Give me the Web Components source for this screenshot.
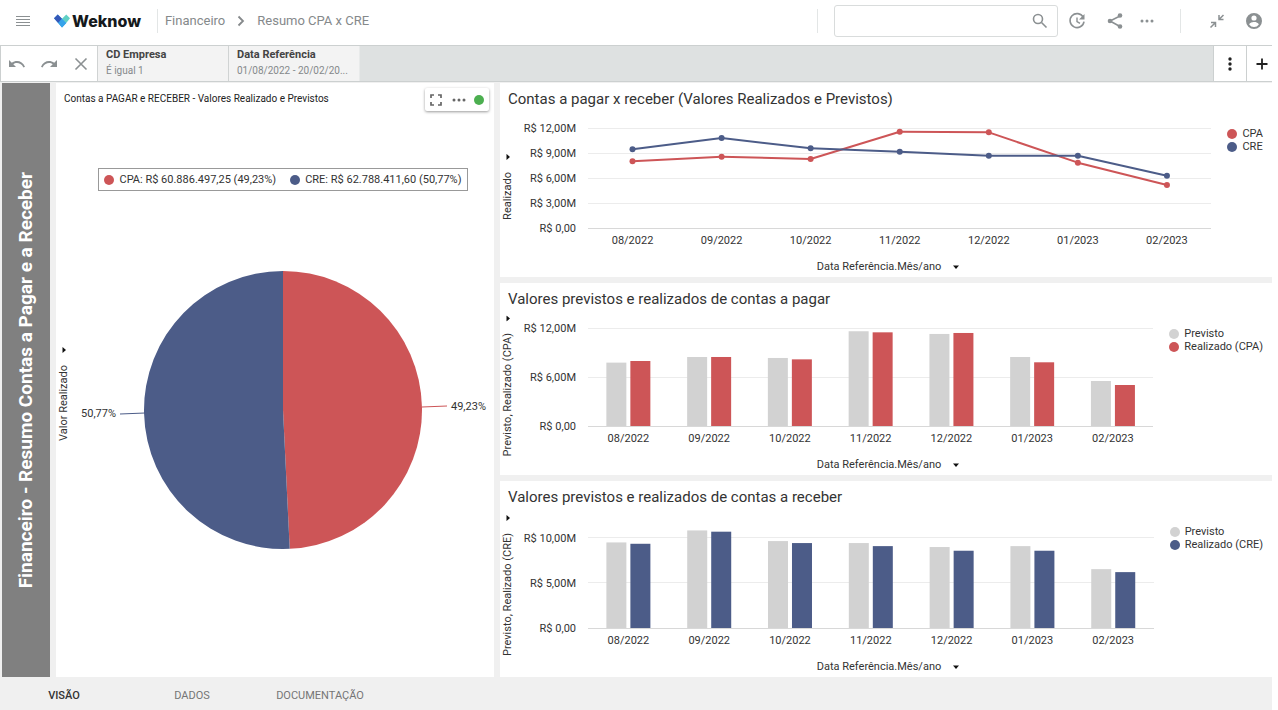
<!DOCTYPE html>
<html lang="pt-BR">
<head>
<meta charset="utf-8">
<meta name="viewport" content="width=device-width, initial-scale=1">
<title>Weknow - Resumo CPA x CRE</title>
<style>
  :root {
    --cpa: #cd5557;
    --cre: #4c5c88;
    --previsto: #d2d2d2;
    --ink: #333;
    --muted: #8b9092;
    --line: #ccd0d0;
    --canvas: #f0f0f0;
  }
  body { margin: 0; background: #fff; font-family: Roboto, "Liberation Sans", sans-serif; font-size: 11px; color: var(--ink); }
</style>
</head>
<body>
<weknow-app></weknow-app>

<script>
class ShadowElement extends HTMLElement {
  constructor() {
    super();
    this.attachShadow({ mode: 'open' });
  }
  render(html) { this.shadowRoot.innerHTML = html; }
}

const ICONS = {
  menu: '<path d="M5 7.500h14M5 10.500h14M5 13.500h14M5 16.500h14" stroke="currentColor" stroke-width="1.200" fill="none"/>',
  refresh: '<path d="M18.2 8.2A7 7 0 1 0 19 12.6" fill="none" stroke="currentColor" stroke-width="1.600"/><path d="M19.500 5v5.500h-5.500z" fill="currentColor"/><path d="M12 8.500v4l3 1.800" fill="none" stroke="currentColor" stroke-width="1.400"/>',
  share: '<path d="M17 7L7 12l10 5.500" fill="none" stroke="currentColor" stroke-width="1.600"/><circle cx="17" cy="6.500" r="2.300"/><circle cx="7" cy="12" r="2.300"/><circle cx="17" cy="17.500" r="2.300"/>',
  dots: '<circle cx="7" cy="12" r="1.500"/><circle cx="12" cy="12" r="1.500"/><circle cx="17" cy="12" r="1.500"/>',
  kebab: '<circle cx="12" cy="7" r="1.700"/><circle cx="12" cy="12" r="1.700"/><circle cx="12" cy="17" r="1.700"/>',
  collapse: '<path d="M14 6v4.500h4.500M14.500 10L18.500 6M6 13.500h4.500V18M10 14l-4.500 4.500" fill="none" stroke="currentColor" stroke-width="1.500"/>',
  user: '<path fill-rule="evenodd" d="M12 4a8 8 0 1 0 0 16 8 8 0 0 0 0-16zm0 2.400a2.600 2.600 0 1 1 0 5.200 2.600 2.600 0 0 1 0-5.200zM12 18a5.700 5.700 0 0 1-4.800-2.600c0-1.600 3.200-2.500 4.800-2.500s4.800.9 4.800 2.500A5.700 5.700 0 0 1 12 18z"/>',
  undo: '<path d="M4 8v7h7l-2.700-2.700C10.500 10.500 15.500 10 18.500 15.500l1.500-.7C17.500 8.500 11 7.500 6.800 10.800z"/>',
  redo: '<path d="M20 8v7h-7l2.700-2.700C13.500 10.500 8.500 10 5.500 15.500L4 14.800C6.500 8.500 13 7.500 17.200 10.800z"/>',
  close: '<path d="M6.500 6.500l11 11M17.500 6.500l-11 11" fill="none" stroke="currentColor" stroke-width="1.600"/>',
  plus: '<path d="M12 6.500v11M6.500 12h11" fill="none" stroke="currentColor" stroke-width="1.800"/>',
  expand: '<path d="M7 10V7h3M14 7h3v3M17 14v3h-3M10 17H7v-3" fill="none" stroke="currentColor" stroke-width="1.700"/>'
};

/* Icon-only button; the label attribute gives its accessible name. */
class IconButton extends ShadowElement {
  connectedCallback() {
    this.render(`
      <style>
        :host { display: flex; color: var(--muted); }
        button { flex: 1; display: flex; align-items: center; justify-content: center; padding: 0; border: 0; background: none; color: inherit; cursor: pointer; min-width: 0; }
        svg { width: 24px; height: 24px; fill: currentColor; flex: none; }
      </style>
      <button type="button" aria-label="${this.getAttribute('label')}"><svg viewBox="0 0 24 24" aria-hidden="true">${ICONS[this.getAttribute('icon')]}</svg></button>`);
  }
}
customElements.define('icon-button', IconButton);

class AppHeader extends ShadowElement {
  connectedCallback() {
    this.render(`
      <style>
        :host { display: flex; align-items: center; height: 45px; padding-bottom: 4px; box-sizing: border-box; background: #fff; }
        .menu { width: 46px; }
        .brand { display: flex; align-items: center; gap: 2px; margin-left: 8px; color: #15191c; text-decoration: none; font: 800 16px/20px Inter, Roboto, sans-serif; }
        .brand svg { width: 16px; height: 14px; }
        .rule { width: 1px; height: 24px; background: #e3e6e6; }
        .brand + .rule { margin-left: 16px; }
        nav { display: flex; align-items: center; gap: 12px; margin-left: 7px; font-size: 13px; line-height: 20px; color: #85898b; white-space: nowrap; }
        nav a { color: inherit; text-decoration: none; }
        nav svg { width: 8px; height: 12px; }
        .search { display: flex; align-items: center; box-sizing: border-box; width: 224px; height: 32px; margin-left: 16px; padding-right: 9px; border: 1px solid #d9dcdc; border-radius: 3px; }
        .spacer { flex: 1; }
        input { flex: 1; min-width: 0; height: 100%; padding: 0 8px; border: 0; background: none; font: inherit; font-size: 13px; outline: none; box-sizing: border-box; }
        .search svg { width: 16px; height: 16px; }
        .wide { width: 38px; }
        .dots { width: 25px; }
        .split { margin: 0 17px 0 21px; }
        .user { width: 36px; }
      </style>
      <icon-button class="menu" icon="menu" label="Menu"></icon-button>
      <a class="brand" href="#">
        <svg viewBox="0 0 17 14" aria-hidden="true">
          <path d="M0 4L4 0l4.500 4.500L13 9l-4.500 5z" fill="#3a9fe0"/><path d="M0 4L4 0l4.500 4.500L4.500 9z" fill="#3558b8"/>
          <path d="M8.500 4.500L13 0l4 4-4 5z" fill="#5fd0c5"/><path d="M4.500 9l4-4.500L13 9l-4.500 5z" fill="#36a3ea"/>
        </svg>Weknow</a>
      <span class="rule"></span>
      <nav aria-label="Trilha">
        <a href="#financeiro">Financeiro</a>
        <svg viewBox="0 0 8 12" aria-hidden="true"><path d="M1.500 1.500L6 6l-4.500 4.500" fill="none" stroke="currentColor" stroke-width="1.800"/></svg>
        <a href="#resumo">Resumo CPA x CRE</a>
      </nav>
      <span class="spacer"></span>
      <span class="rule"></span>
      <div class="search">
        <input type="search" aria-label="Pesquisar">
        <svg viewBox="0 0 16 16" aria-hidden="true"><g fill="none" stroke="#8b9092" stroke-width="1.600"><circle cx="6" cy="6" r="4.500"/><path d="M9.500 9.500l5 5"/></g></svg>
      </div>
      <icon-button class="wide" icon="refresh" label="Atualizar"></icon-button>
      <icon-button class="wide" icon="share" label="Compartilhar"></icon-button>
      <icon-button class="dots" icon="dots" label="Mais opções"></icon-button>
      <span class="rule split"></span>
      <icon-button class="wide" icon="collapse" label="Recolher"></icon-button>
      <icon-button class="user" icon="user" label="Conta"></icon-button>`);
  }
}
customElements.define('app-header', AppHeader);

class FilterChip extends ShadowElement {
  connectedCallback() {
    this.render(`
      <style>
        :host { display: block; width: 131px; border-left: 1px solid #d0d3d3; box-sizing: border-box; background: #f3f3f3; }
        button { display: block; width: 100%; height: 100%; padding: 0 8px 2px; border: 0; background: none; font: inherit; text-align: left; line-height: 16px; cursor: pointer; white-space: nowrap; }
        strong { display: block; font-weight: 700; color: #444; }
        span { display: block; font-size: 10px; color: #85898b; }
      </style>
      <button type="button"><strong>${this.getAttribute('name')}</strong><span><slot></slot></span></button>`);
  }
}
customElements.define('filter-chip', FilterChip);

class FilterBar extends ShadowElement {
  connectedCallback() {
    this.render(`
      <style>
        :host { display: flex; height: 37px; box-sizing: border-box; border: 1px solid var(--line); border-right: 0; background: #dee1e1; }
        .history { display: flex; width: 96px; background: #fff; }
        .history icon-button { width: 32px; }
        .spacer { flex: 1; border-left: 1px solid #e8eaea; }
        .end { background: #fff; color: #222; border-left: 1px solid var(--line); width: 32px; }
        .add { width: 21px; padding-left: 4px; }
      </style>
      <div class="history">
        <icon-button icon="undo" label="Desfazer"></icon-button>
        <icon-button icon="redo" label="Refazer"></icon-button>
        <icon-button icon="close" label="Limpar"></icon-button>
      </div>
      <filter-chip name="CD Empresa">É igual 1</filter-chip>
      <filter-chip name="Data Referência">01/08/2022 - 20/02/20...</filter-chip>
      <span class="spacer"></span>
      <icon-button class="end" icon="kebab" label="Opções de filtro"></icon-button>
      <icon-button class="end add" icon="plus" label="Adicionar filtro"></icon-button>`);
  }
}
customElements.define('filter-bar', FilterBar);

class SideTitle extends ShadowElement {
  connectedCallback() {
    this.render(`
      <style>
        :host { display: flex; align-items: center; justify-content: center; background: #808080; }
        h1 { margin: 0; color: #fff; font-size: 19px; line-height: 24px; font-weight: 700; writing-mode: vertical-rl; transform: rotate(180deg); white-space: nowrap; }
      </style>
      <h1><slot></slot></h1>`);
  }
}
customElements.define('side-title', SideTitle);

/* Axis name with its drop-down arrow, set upright or along the vertical axis. */
class AxisPicker extends ShadowElement {
  connectedCallback() {
    this.render(`
      <style>
        :host { display: flex; align-items: center; justify-content: center; }
        button { display: flex; align-items: center; gap: 12px; padding: 0; border: 0; background: none; font: inherit; line-height: 16px; color: inherit; white-space: nowrap; cursor: pointer; }
        svg { width: 6px; height: 6px; flex: none; }
        :host([vertical]) button { writing-mode: vertical-rl; transform: rotate(180deg); }
        :host([vertical]) svg { transform: rotate(90deg); }
      </style>
      <button type="button"><slot></slot><svg viewBox="0 0 6 6" aria-hidden="true"><path d="M0 1.500h6L3 5z" fill="#111"/></svg></button>`);
  }
}
customElements.define('axis-picker', AxisPicker);

class LegendItem extends ShadowElement {
  connectedCallback() {
    this.render(`
      <style>
        :host { display: flex; align-items: center; gap: 5px; line-height: 13px; white-space: nowrap; }
        i { width: 10px; height: 10px; border-radius: 50%; background: var(--${this.getAttribute('series')}); }
      </style>
      <i></i><slot></slot>`);
  }
}
customElements.define('legend-item', LegendItem);

/* Card of a cartesian chart: title, axis names, plot and legend. */
class ChartPanel extends ShadowElement {
  connectedCallback() {
    this.render(`
      <style>
        :host { display: grid; grid-template: auto minmax(0, 1fr) auto / 16px minmax(0, 1fr) auto; background: #fff; padding-top: 7px; box-sizing: border-box; min-height: 0; }
        h2 { grid-column: 1 / -1; margin: 0 0 0 8px; font-size: 15px; line-height: 18px; font-weight: 400; }
        .y { grid-area: 2 / 1 / 4 / 2; padding-bottom: 11px; }
        .plot { grid-area: 2 / 2; display: grid; margin: 20px 0 0 72px; min-height: 0; }
        .legend { grid-area: 2 / 3; margin: 19px 9px 0 16px; }
        .x { grid-area: 3 / 1 / 4 / -1; padding: 6px 0 2px 4px; }
      </style>
      <h2>${this.getAttribute('heading')}</h2>
      <axis-picker class="y" vertical>${this.getAttribute('y-name')}</axis-picker>
      <div class="plot"><slot></slot></div>
      <div class="legend"><slot name="legend"></slot></div>
      <axis-picker class="x">${this.getAttribute('x-name')}</axis-picker>`);
  }
}
customElements.define('chart-panel', ChartPanel);

/* Shared scale, grid lines and labels of the month charts. */
class MonthChart extends ShadowElement {
  connectedCallback() {
    this.max = Number(this.getAttribute('max'));
    this.months = this.getAttribute('months').split(' ');
    this.series = JSON.parse(this.getAttribute('values'));
    const ticks = this.getAttribute('ticks').split(' ').map(Number);
    this.render(`
      <style>
        :host { display: flex; flex-direction: column; min-height: 0; }
        svg { flex: 1 0 60px; width: 100%; min-height: 0; overflow: visible; display: block; }
        text { font-size: 11px; fill: var(--ink); text-anchor: end; }
        .grid { stroke: #ececec; shape-rendering: crispEdges; }
        .base { stroke: #d8d8d8; }
        .months { display: flex; line-height: 13px; padding: 6px 0; }
        .months span { flex: 1; text-align: center; }
      </style>
      <svg role="img" aria-label="${Object.keys(this.series).join(', ').toUpperCase()}">
        ${ticks.map(t => `<line class="grid${t ? '' : ' base'}" x1="0" x2="100%" y1="${this.y(t)}" y2="${this.y(t)}"/>
          <text x="-12" y="${this.y(t)}" dy="4">R$ ${t},00${t ? 'M' : ''}</text>`).join('')}
        ${this.marks()}
      </svg>
      <div class="months">${this.months.map(m => `<span>${m}</span>`).join('')}</div>`);
  }
  y(v) { return (100 - v / this.max * 100).toFixed(2) + '%'; }
  x(i) { return ((i + 0.5) / this.months.length * 100).toFixed(2) + '%'; }
}

class LineChart extends MonthChart {
  marks() {
    return Object.entries(this.series).map(([name, v]) => `<g stroke="var(--${name})" fill="var(--${name})" stroke-width="2">
      ${v.slice(1).map((b, i) => `<line x1="${this.x(i)}" y1="${this.y(v[i])}" x2="${this.x(i + 1)}" y2="${this.y(b)}"/>`).join('')}
      ${v.map((a, i) => `<circle cx="${this.x(i)}" cy="${this.y(a)}" r="3" stroke="none"/>`).join('')}</g>`).join('');
  }
}
customElements.define('line-chart', LineChart);

class BarChart extends MonthChart {
  marks() {
    return Object.entries(this.series).map(([name, v], s) => `<g fill="var(--${name})" transform="translate(${s ? 2 : -22} 0)">
      ${v.map((a, i) => `<rect x="${this.x(i)}" y="${this.y(a)}" width="20" height="${(a / this.max * 100).toFixed(2)}%"/>`).join('')}</g>`).join('');
  }
}
customElements.define('bar-chart', BarChart);

class PieChart extends ShadowElement {
  connectedCallback() {
    const share = Number(this.getAttribute('share')) / 100, r = 139, cx = 211, cy = 140;
    const a = share * 2 * Math.PI;
    const ex = cx + r * Math.sin(a), ey = cy - r * Math.cos(a);
    this.render(`
      <style>
        :host { display: block; }
        svg { display: block; width: 100%; max-height: 560px; }
        text { font-size: 11px; fill: var(--ink); }
      </style>
      <svg viewBox="0 0 422 280" role="img" aria-label="CPA e CRE">
        <path d="M${cx} ${cy}V${cy - r}A${r} ${r} 0 0 1 ${ex} ${ey}Z" fill="var(--cpa)"/>
        <path d="M${cx} ${cy}L${ex} ${ey}A${r} ${r} 0 1 1 ${cx} ${cy - r}Z" fill="var(--cre)"/>
        <path d="M350 137l25-1" stroke="var(--cpa)"/>
        <path d="M48 144l25-1" stroke="var(--cre)"/>
        <text x="379" y="140">49,23%</text>
        <text x="44" y="147" text-anchor="end">50,77%</text>
      </svg>`);
  }
}
customElements.define('pie-chart', PieChart);

class PiePanel extends ShadowElement {
  connectedCallback() {
    this.render(`
      <style>
        :host { display: grid; grid-template: 29px minmax(0, 1fr) / 16px minmax(0, 1fr); background: #fff; position: relative; }
        h2 { grid-column: 1 / -1; margin: 0 0 0 8px; font-size: 10px; line-height: 32px; font-weight: 400; color: #222; }
        .tools { position: absolute; top: 5px; right: 5px; display: flex; align-items: center; height: 23px; padding-right: 5px; background: #fff; border-radius: 2px; box-shadow: 0 1px 3px rgba(0, 0, 0, .4); }
        .tools icon-button { width: 23px; color: #666; }
        .tools icon-button:first-child { width: 22px; }
        .tools i { width: 10px; height: 10px; margin-left: 4px; border-radius: 50%; background: #4caf50; }
        .body { display: flex; flex-direction: column; align-items: center; padding-top: 56px; }
        .legend { display: flex; gap: 14px; padding: 4px 5px; border: 1px solid #999; }
        pie-chart { width: 100%; margin: auto 0; }
        .room { height: 48px; }
      </style>
      <h2>Contas a PAGAR e RECEBER - Valores Realizado e Previstos</h2>
      <div class="tools">
        <icon-button icon="expand" label="Expandir"></icon-button>
        <icon-button icon="dots" label="Opções do gráfico"></icon-button>
        <i></i>
      </div>
      <axis-picker vertical>Valor Realizado</axis-picker>
      <div class="body">
        <div class="legend">
          <legend-item series="cpa">CPA: R$ 60.886.497,25 (49,23%)</legend-item>
          <legend-item series="cre">CRE: R$ 62.788.411,60 (50,77%)</legend-item>
        </div>
        <pie-chart share="49.23"></pie-chart>
        <div class="room"></div>
      </div>`);
  }
}
customElements.define('pie-panel', PiePanel);

class ViewTabs extends ShadowElement {
  connectedCallback() {
    this.render(`
      <style>
        :host { display: block; background: var(--canvas); }
        nav { display: flex; }
        a { width: 128px; padding: 11px 0 6px; line-height: 16px; text-align: center; text-decoration: none; color: #757575; font-weight: 400; }
        a[aria-current] { color: #333; font-weight: 500; }
      </style>
      <nav aria-label="Seções">
        <a href="#visao" aria-current="page">VISÃO</a><a href="#dados">DADOS</a><a href="#documentacao">DOCUMENTAÇÃO</a>
      </nav>`);
  }
}
customElements.define('view-tabs', ViewTabs);

class WeknowApp extends ShadowElement {
  connectedCallback() {
    const months = '08/2022 09/2022 10/2022 11/2022 12/2022 01/2023 02/2023';
    this.render(`
      <style>
        :host { display: flex; flex-direction: column; min-height: 100vh; padding-right: 6px; box-sizing: border-box; }
        main { flex: 1; display: grid; grid-template-columns: 48px minmax(0, 438fr) minmax(0, 772fr); gap: 6px; padding: 1px 0 0 2px; background: var(--canvas); }
        .column { display: grid; grid-template-rows: minmax(180px, 194fr) minmax(180px, 192fr) minmax(180px, 196fr); gap: 6px; }
      </style>
      <app-header></app-header>
      <filter-bar></filter-bar>
      <main>
        <side-title>Financeiro - Resumo Contas a Pagar e a Receber</side-title>
        <pie-panel></pie-panel>
        <div class="column">
          <chart-panel heading="Contas a pagar x receber (Valores Realizados e Previstos)" y-name="Realizado" x-name="Data Referência.Mês/ano">
            <line-chart max="12" ticks="12 9 6 3 0" months="${months}"
              values='{"cpa":[8,8.56,8.28,11.56,11.48,7.84,5.16],"cre":[9.44,10.8,9.56,9.16,8.68,8.68,6.28]}'></line-chart>
            <legend-item slot="legend" series="cpa">CPA</legend-item>
            <legend-item slot="legend" series="cre">CRE</legend-item>
          </chart-panel>
          <chart-panel heading="Valores previstos e realizados de contas a pagar" y-name="Previsto, Realizado (CPA)" x-name="Data Referência.Mês/ano">
            <bar-chart max="12" ticks="12 6 0" months="${months}"
              values='{"previsto":[7.76,8.45,8.33,11.6,11.27,8.45,5.51],"cpa":[7.96,8.45,8.16,11.47,11.39,7.8,5.02]}'></bar-chart>
            <legend-item slot="legend" series="previsto">Previsto</legend-item>
            <legend-item slot="legend" series="cpa">Realizado (CPA)</legend-item>
          </chart-panel>
          <chart-panel heading="Valores previstos e realizados de contas a receber" y-name="Previsto, Realizado (CRE)" x-name="Data Referência.Mês/ano">
            <bar-chart max="11.3" ticks="10 5 0" months="${months}"
              values='{"previsto":[9.48,10.81,9.63,9.41,8.97,9.07,6.52],"cre":[9.33,10.67,9.41,9.07,8.56,8.56,6.19]}'></bar-chart>
            <legend-item slot="legend" series="previsto">Previsto</legend-item>
            <legend-item slot="legend" series="cre">Realizado (CRE)</legend-item>
          </chart-panel>
        </div>
      </main>
      <view-tabs></view-tabs>`);
  }
}
customElements.define('weknow-app', WeknowApp);
</script>
</body>
</html>
